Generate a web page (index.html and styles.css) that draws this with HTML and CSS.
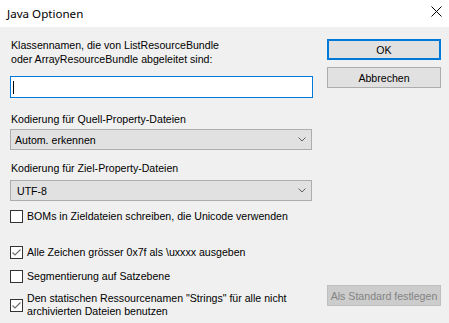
FILE: index.html
```html
<!DOCTYPE html>
<html lang="de">
<head>
  <meta charset="UTF-8" />
  <title>Java Optionen</title>
  <link rel="stylesheet" href="styles.css">
</head>
<body>
  <div class="window">
    <div class="titlebar">
      <span class="title">Java Optionen</span>
      <svg class="close" width="11" height="11" viewBox="0 0 11 11">
        <path d="M0.5 0.5 L10.5 10.5 M10.5 0.5 L0.5 10.5" stroke="#000" stroke-width="1" fill="none" />
      </svg>
    </div>

    <div class="dialog">
      <div class="left">
        <div class="label two-line">Klassennamen, die von ListResourceBundle<br>oder ArrayResourceBundle abgeleitet sind:</div>
        <div class="textbox"><span class="caret"></span></div>

        <div class="label src-label">Kodierung für Quell-Property-Dateien</div>
        <div class="combo combo-src">
          <span>Autom. erkennen</span>
          <svg width="8" height="5" viewBox="0 0 8 5"><path d="M0.5 0.5 L4 4 L7.5 0.5" stroke="#606060" fill="none" /></svg>
        </div>

        <div class="label dst-label">Kodierung für Ziel-Property-Dateien</div>
        <div class="combo combo-dst">
          <span>UTF-8</span>
          <svg width="8" height="5" viewBox="0 0 8 5"><path d="M0.5 0.5 L4 4 L7.5 0.5" stroke="#606060" fill="none" /></svg>
        </div>

        <div class="check row-bom">
          <span class="box"></span>
          <span class="text">BOMs in Zieldateien schreiben, die Unicode verwenden</span>
        </div>
        <div class="check row-esc">
          <span class="box checked"><svg width="11" height="11" viewBox="0 0 11 11"><path d="M1.5 5.5 L4 8 L9.5 2.5" stroke="#707070" stroke-width="1.2" fill="none" /></svg></span>
          <span class="text">Alle Zeichen grösser 0x7f als \uxxxx ausgeben</span>
        </div>
        <div class="check row-seg">
          <span class="box"></span>
          <span class="text">Segmentierung auf Satzebene</span>
        </div>
        <div class="check row-res">
          <span class="box checked"><svg width="11" height="11" viewBox="0 0 11 11"><path d="M1.5 5.5 L4 8 L9.5 2.5" stroke="#707070" stroke-width="1.2" fill="none" /></svg></span>
          <span class="text">Den statischen Ressourcenamen "Strings" für alle nicht<br>archivierten Dateien benutzen</span>
        </div>
      </div>

      <div class="right">
        <div class="button default">OK</div>
        <div class="button cancel">Abbrechen</div>
        <div class="button disabled">Als Standard festlegen</div>
      </div>
    </div>
  </div>
</body>
</html>
```

FILE: styles.css
```css
body {
  margin: 0;
  background: #f0f0f0;
  font-family: 'Liberation Sans', Arial, sans-serif;
  font-size: 10.6px;
  color: #000;
}

.window {
  width: 449px;
  height: 323px;
  display: flex;
  flex-direction: column;
  background: #f0f0f0;
}

.titlebar {
  height: 27px;
  background: #fff;
  display: flex;
  align-items: center;
  justify-content: space-between;
  padding: 0 7px 0 7px;
  box-sizing: border-box;
}

.title {
  font-family: 'Noto Sans', sans-serif;
  font-size: 11.6px;
  margin-top: -1px;
}

.close {
  margin-top: -5px;
}

.dialog {
  flex: 1;
  display: flex;
  padding-left: 10px;
}

.left {
  width: 303px;
  display: flex;
  flex-direction: column;
  padding-top: 11px;
}

.right {
  width: 114px;
  margin-left: 14px;
  display: flex;
  flex-direction: column;
  padding-top: 12px;
  padding-bottom: 17px;
}

.label {
  line-height: 14px;
  padding-left: 1px;
}

.textbox {
  margin-top: 10px;
  height: 22px;
  box-sizing: border-box;
  border: 1px solid #0078d7;
  background: #fff;
  display: flex;
  align-items: center;
  padding-left: 2px;
}

.caret {
  width: 1px;
  height: 13px;
  background: #000;
}

.src-label {
  margin-top: 14px;
}

.dst-label {
  margin-top: 11px;
}

.combo {
  height: 21px;
  box-sizing: border-box;
  border: 1px solid #adadad;
  background: #e1e1e1;
  display: flex;
  align-items: center;
  justify-content: space-between;
  padding: 0 5px 0 4px;
  width: 302px;
}

.combo-src {
  margin-top: 3px;
}

.combo-dst {
  margin-top: 5px;
}

.combo-dst span {
  padding-left: 2px;
}

.check {
  display: flex;
  align-items: center;
  line-height: 13px;
}

.box {
  width: 13px;
  height: 13px;
  box-sizing: border-box;
  border: 1px solid #333;
  background: #fff;
  margin-right: 4px;
  flex-shrink: 0;
  display: flex;
  align-items: center;
  justify-content: center;
}

.row-bom {
  margin-top: 9px;
}

.row-esc {
  margin-top: 23px;
}

.row-seg {
  margin-top: 11px;
}

.row-res {
  margin-top: 9px;
}

.button {
  height: 21px;
  box-sizing: border-box;
  border: 1px solid #adadad;
  background: #e1e1e1;
  display: flex;
  align-items: center;
  justify-content: center;
}

.button.default {
  border: 2px solid #0078d7;
}

.button.cancel {
  margin-top: 7px;
}

.button.disabled {
  margin-top: auto;
  background: #cccccc;
  border-color: #bfbfbf;
  color: #838383;
}
```
